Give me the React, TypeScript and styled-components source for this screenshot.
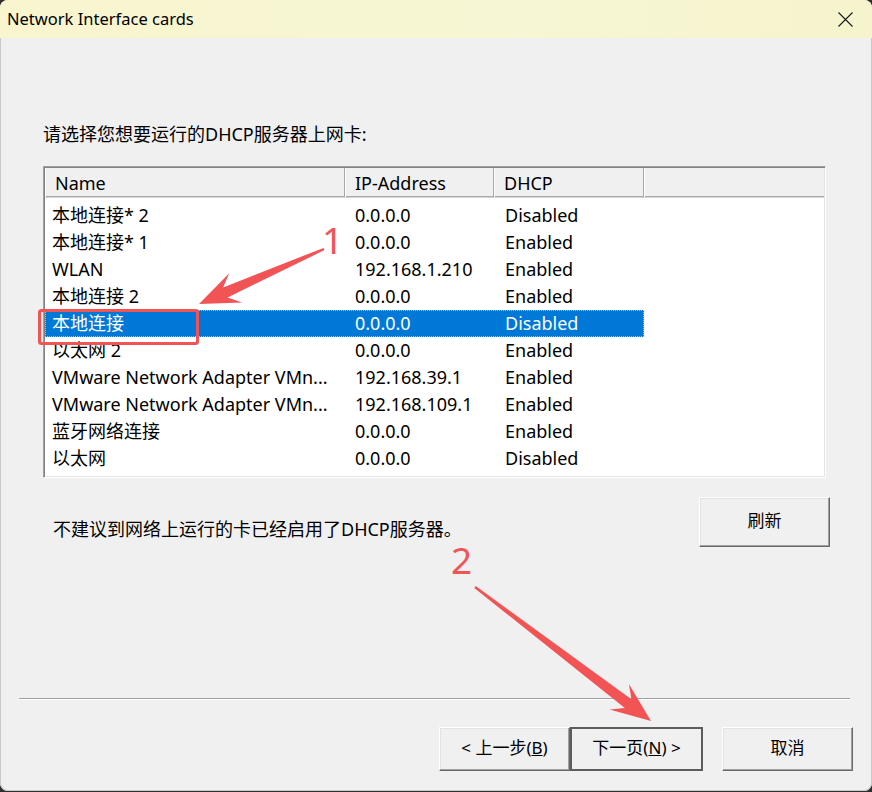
import React from 'react';
import styled, { createGlobalStyle } from 'styled-components';

const GlobalStyle = createGlobalStyle`
  html, body {
    margin: 0;
    padding: 0;
    background: #2f2f2f;
  }
  * {
    box-sizing: border-box;
  }
`;

const UI_FONT = `"Noto Sans", "Noto Sans CJK SC", sans-serif`;

const Window = styled.div`
  position: relative;
  width: 872px;
  height: 791px;
  background: #f0f0f0;
  border-radius: 8px;
  overflow: hidden;
  display: flex;
  flex-direction: column;
  font-family: ${UI_FONT};
  color: #000;
  box-shadow: inset 0 0 0 1px #c8c8c8;
`;

const TitleBar = styled.div`
  height: 38px;
  flex: none;
  display: flex;
  align-items: center;
  justify-content: space-between;
  padding: 0 19px 0 7px;
  background: linear-gradient(90deg, #f8f5cf 0%, #f7f6d4 60%, #f6f4cd 100%);
`;

const Title = styled.span`
  font-size: 16.5px;
  line-height: 22px;
`;

const CloseButton = styled.div`
  width: 15px;
  height: 15px;
  display: flex;
`;

const Content = styled.div`
  flex: 1;
  display: flex;
  flex-direction: column;
  padding: 84px 42px 0 43px;
`;

const Prompt = styled.div`
  font-size: 18px;
  line-height: 24px;
`;

const ListBox = styled.div`
  margin: 20px 4px 0 0;
  height: 312px;
  background: #fff;
  border-top: 1px solid #a0a0a0;
  border-left: 1px solid #a0a0a0;
  border-bottom: 1px solid #fff;
  border-right: 1px solid #fff;
  box-shadow: inset 1px 1px 0 #828282, inset -1px -1px 0 #e3e3e3;
  padding: 1px;
  overflow: hidden;
`;

const Columns = `300px 149px 150px`;

const Header = styled.div`
  display: grid;
  grid-template-columns: ${Columns} 1fr;
  height: 30px;
  background: #f0f0f0;
  border-bottom: 1px solid #d5d5d5;
`;

const HeaderCell = styled.div`
  display: flex;
  align-items: center;
  padding-left: 10px;
  font-size: 18px;
  border-right: 1px solid #a8a8a8;
  box-shadow: inset 1px 0 0 #fff, inset 0 -1px 0 #a8a8a8;

  &:last-child {
    border-right: none;
  }
`;

const Rows = styled.div`
  padding-top: 4px;
`;

const Row = styled.div<{ $selected?: boolean }>`
  display: grid;
  grid-template-columns: ${Columns};
  width: 599px;
  height: 27px;
  align-items: center;
  font-size: 18px;
  line-height: 27px;
  white-space: nowrap;
  background: ${(p) => (p.$selected ? '#0078d7' : 'transparent')};
  color: ${(p) => (p.$selected ? '#fff' : '#000')};
  outline: ${(p) => (p.$selected ? '1px dotted #f2b46a' : 'none')};
  outline-offset: -1px;
`;

const Cell = styled.div<{ $pad: number }>`
  padding-left: ${(p) => p.$pad}px;
  min-width: 0;
`;

const NoteRow = styled.div`
  display: flex;
  justify-content: space-between;
  align-items: flex-start;
  margin-top: 19px;
`;

const Note = styled.div`
  margin: 20px 0 0 10px;
  font-size: 18px;
  line-height: 24px;
`;

const Button = styled.button<{ $default?: boolean }>`
  width: ${(p) => (p.$default ? 133 : 131)}px;
  height: 44px;
  margin: 0;
  padding: 0 0 2px;
  font-family: ${UI_FONT};
  font-size: 17px;
  line-height: 24px;
  color: #000;
  background: #f0f0f0;
  border: 1px solid;
  border-color: #fff #696969 #696969 #fff;
  box-shadow: inset -1px -1px 0 #a0a0a0, inset 1px 1px 0 #e3e3e3;
  outline: ${(p) => (p.$default ? '2px solid #5c5c5c' : 'none')};
  outline-offset: -2px;
  cursor: default;
`;

const RefreshButton = styled(Button)`
  height: 50px;
`;

const Footer = styled.div`
  flex: none;
  display: flex;
  flex-direction: column;
  padding-bottom: 20px;
`;

const Separator = styled.div`
  margin: 0 22px 0 19px;
  height: 2px;
  border-top: 1px solid #a0a0a0;
  border-bottom: 1px solid #fff;
`;

const ButtonRow = styled.div`
  display: flex;
  justify-content: flex-end;
  padding: 27px 19px 0 0;
`;

const ButtonGroup = styled.div`
  display: flex;
  margin-right: 19px;
`;

const Overlay = styled.svg`
  position: absolute;
  left: 0;
  top: 0;
  pointer-events: none;
`;

type Adapter = { name: string; ip: string; dhcp: string };

const adapters: Adapter[] = [
  { name: '本地连接* 2', ip: '0.0.0.0', dhcp: 'Disabled' },
  { name: '本地连接* 1', ip: '0.0.0.0', dhcp: 'Enabled' },
  { name: 'WLAN', ip: '192.168.1.210', dhcp: 'Enabled' },
  { name: '本地连接 2', ip: '0.0.0.0', dhcp: 'Enabled' },
  { name: '本地连接', ip: '0.0.0.0', dhcp: 'Disabled' },
  { name: '以太网 2', ip: '0.0.0.0', dhcp: 'Enabled' },
  { name: 'VMware Network Adapter VMn...', ip: '192.168.39.1', dhcp: 'Enabled' },
  { name: 'VMware Network Adapter VMn...', ip: '192.168.109.1', dhcp: 'Enabled' },
  { name: '蓝牙网络连接', ip: '0.0.0.0', dhcp: 'Enabled' },
  { name: '以太网', ip: '0.0.0.0', dhcp: 'Disabled' },
];

// tapered callout arrow from tail to tip
const arrowPoints = (tx: number, ty: number, hx: number, hy: number) => {
  const headLen = 40;
  const headHalf = 16;
  const neck = 5.5;
  const tail = 1.2;
  const dx = hx - tx;
  const dy = hy - ty;
  const len = Math.hypot(dx, dy);
  const ux = dx / len;
  const uy = dy / len;
  const nx = -uy;
  const ny = ux;
  const wx = hx - ux * headLen;
  const wy = hy - uy * headLen;
  const kx = hx - ux * headLen * 0.72;
  const ky = hy - uy * headLen * 0.72;
  const pts = [
    [tx + nx * tail, ty + ny * tail],
    [kx + nx * neck, ky + ny * neck],
    [wx + nx * headHalf, wy + ny * headHalf],
    [hx, hy],
    [wx - nx * headHalf, wy - ny * headHalf],
    [kx - nx * neck, ky - ny * neck],
    [tx - nx * tail, ty - ny * tail],
  ];
  return pts.map((p) => p.map((v) => v.toFixed(1)).join(',')).join(' ');
};

const Annotations: React.FC = () => (
  <Overlay width={872} height={792} viewBox="0 0 872 792">
    <rect x={39.5} y={310.5} width={158} height={33} rx={2} fill="none" stroke="#f25456" strokeWidth={3} />
    <polygon points={arrowPoints(324, 249, 199, 304)} fill="#f25456" />
    <polygon points={arrowPoints(475, 587, 651, 721)} fill="#f25456" />
    <text x={322} y={254} fontFamily={UI_FONT} fontSize={37} fill="#f25456">1</text>
    <text x={451} y={574} fontFamily={UI_FONT} fontSize={37} fill="#f25456">2</text>
  </Overlay>
);

const App: React.FC = () => {
  return (
    <>
      <GlobalStyle />
      <Window>
        <TitleBar>
          <Title>Network Interface cards</Title>
          <CloseButton>
            <svg width="15" height="15" viewBox="0 0 15 15">
              <path d="M0.5 0.5 L14.5 14.5 M14.5 0.5 L0.5 14.5" stroke="#1a1a1a" strokeWidth="1.1" />
            </svg>
          </CloseButton>
        </TitleBar>

        <Content>
          <Prompt>请选择您想要运行的DHCP服务器上网卡:</Prompt>
          <ListBox>
            <Header>
              <HeaderCell>Name</HeaderCell>
              <HeaderCell>IP-Address</HeaderCell>
              <HeaderCell>DHCP</HeaderCell>
              <HeaderCell />
            </Header>
            <Rows>
              {adapters.map((a, i) => (
                <Row key={i} $selected={i === 4}>
                  <Cell $pad={7}>{a.name}</Cell>
                  <Cell $pad={10}>{a.ip}</Cell>
                  <Cell $pad={11}>{a.dhcp}</Cell>
                </Row>
              ))}
            </Rows>
          </ListBox>
          <NoteRow>
            <Note>不建议到网络上运行的卡已经启用了DHCP服务器。</Note>
            <RefreshButton>刷新</RefreshButton>
          </NoteRow>
        </Content>

        <Footer>
          <Separator />
          <ButtonRow>
            <ButtonGroup>
              <Button>&lt; 上一步(<u>B</u>)</Button>
              <Button $default>下一页(<u>N</u>) &gt;</Button>
            </ButtonGroup>
            <Button>取消</Button>
          </ButtonRow>
        </Footer>

        <Annotations />
      </Window>
    </>
  );
};

export default App;
